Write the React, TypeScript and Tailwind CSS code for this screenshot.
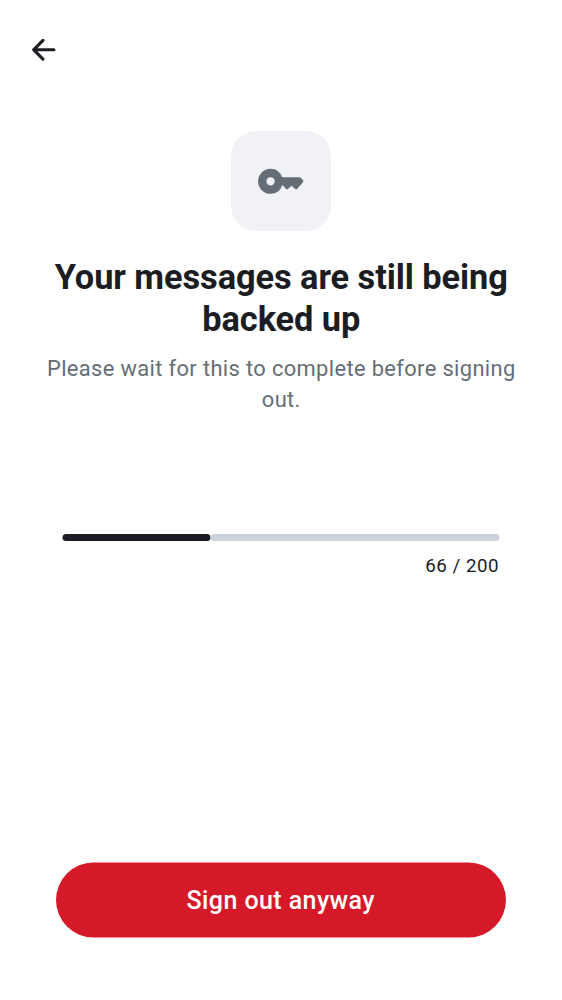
import React from "react";

const completed = 66;
const total = 200;

export default function App() {
  return (
    <main className="flex h-[1000px] w-[562px] flex-col bg-white font-['Roboto',sans-serif] text-[#1b1d22]">
      <header className="flex h-[100px] items-center pl-[25px]">
        <button type="button" aria-label="Back" className="size-[37.5px]">
          <svg viewBox="0 0 24 24" className="size-full" fill="currentColor">
            <path d="M12.207 5.293a1 1 0 0 1 0 1.414L7.914 11H18.5a1 1 0 1 1 0 2H7.914l4.293 4.293a1 1 0 0 1-1.414 1.414l-6-6a1 1 0 0 1 0-1.414l6-6a1 1 0 0 1 1.414 0Z" />
          </svg>
        </button>
      </header>
      <section className="flex flex-col items-center pt-[31px] text-center">
        <div className="flex size-[100px] items-center justify-center rounded-[25px] bg-[#f0f2f5] text-[#656d77]">
          <svg viewBox="0 0 24 24" className="size-[50px] translate-y-[0.3px]" fill="currentColor">
            <path fillRule="evenodd" d="M7 18a5.8 5.8 0 0 1-4.25-1.75A5.8 5.8 0 0 1 1 12c0-1.67.58-3.08 1.75-4.25A5.8 5.8 0 0 1 7 6c1.35 0 2.52.38 3.51 1.15A6.1 6.1 0 0 1 12.6 10h8.1a1 1 0 0 1 .7.3l1 1a1 1 0 0 1 .3.7 1 1 0 0 1-.3.7l-2.6 2.85a.8.8 0 0 1-1.15.05L17.05 14.1l-1.6 1.5a.8.8 0 0 1-1.15-.05L12.8 13.9h-.2a6 6 0 0 1-2.05 2.95A5.7 5.7 0 0 1 7 18Zm0-4a2 2 0 1 0 0-4 2 2 0 0 0 0 4Z" />
          </svg>
        </div>
        <h1 className="mt-[25px] w-[480px] pl-[0.5px] text-[34.375px] leading-[42px] font-bold tracking-[-0.07px]">Your messages are still being backed up</h1>
        <p className="mt-[13px] w-[500px] pl-[0.6px] text-[21.875px] leading-[31.25px] tracking-[0.37px] text-[#656d77]">Please wait for this to complete before signing out.</p>
      </section>
      <section className="mt-[118px] px-[62px]">
        <div role="progressbar" aria-valuenow={completed} aria-valuemax={total} className="flex h-[7px] w-[437px] translate-x-[0.5px]">
          <span className="rounded-full bg-[#1b1d22]" style={{ width: `${(completed / total) * 100 + 0.8}%` }} />
          <span className="flex-1 rounded-full bg-[#cdd3da]" />
        </div>
        <p className="mt-[13px] pr-px text-right text-[18.75px] leading-[25px] tracking-[0.5px]">{completed} / {total}</p>
      </section>
      <button type="button" className="mx-[56px] mt-auto mb-[62px] h-[75px] translate-y-[-0.5px] rounded-full bg-[#d51928] pr-[0.6px] text-[25px] font-medium tracking-[0.42px] text-white">Sign out anyway</button>
    </main>
  );
}
